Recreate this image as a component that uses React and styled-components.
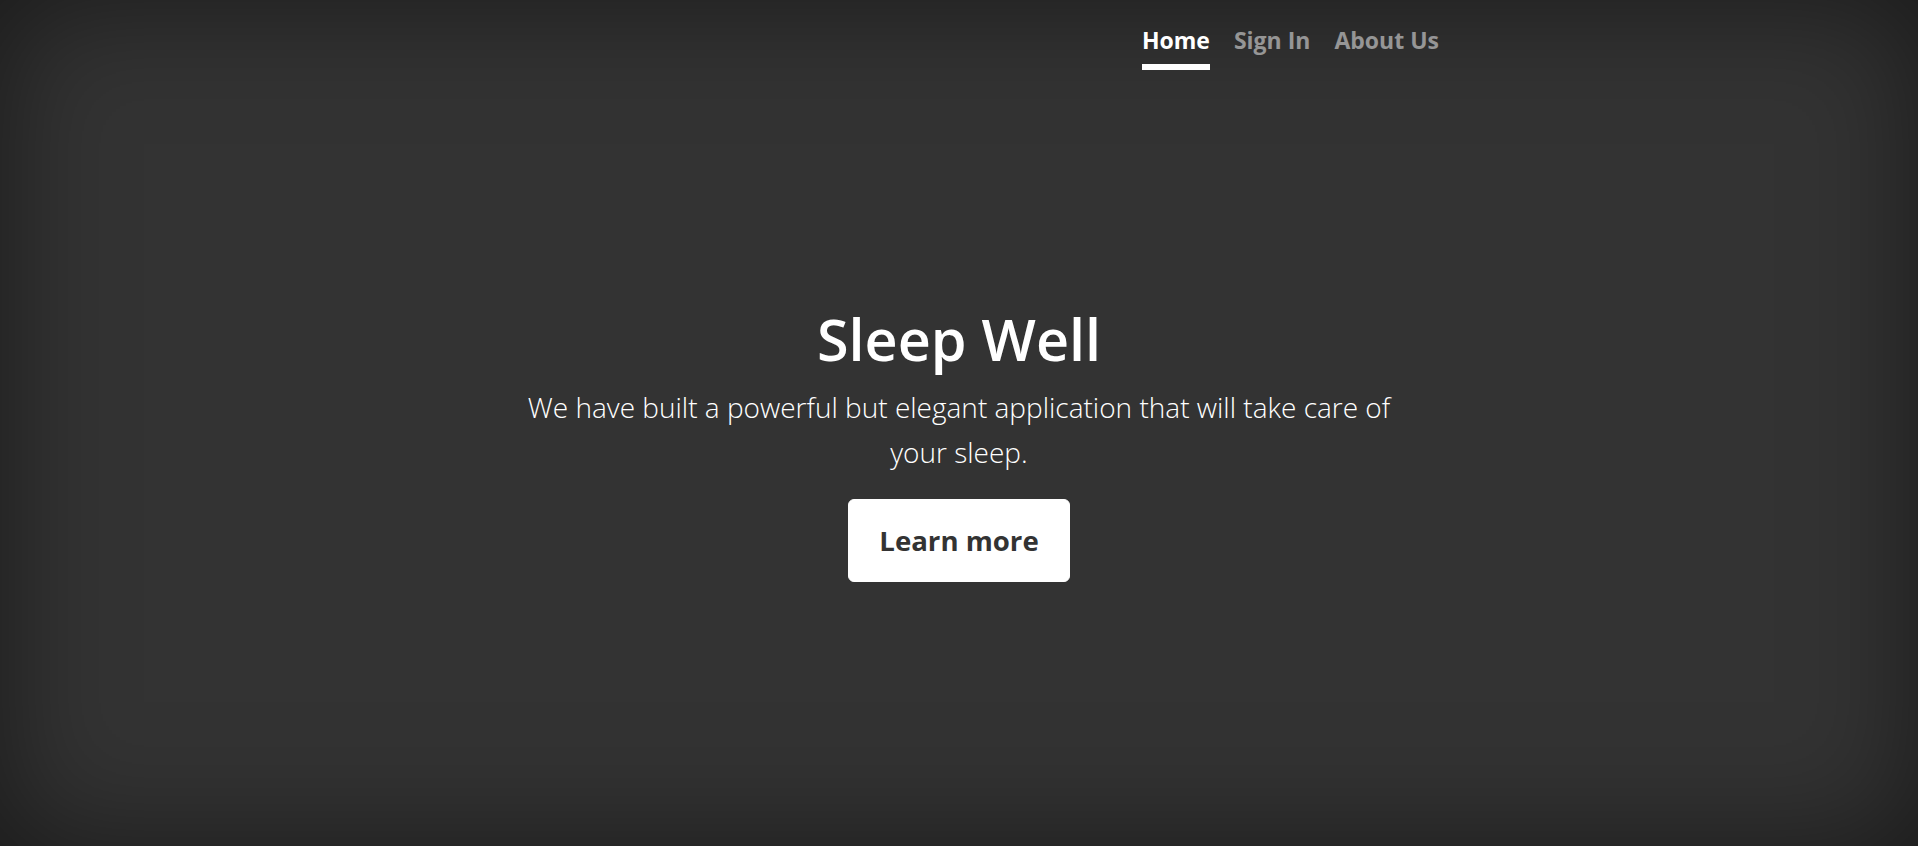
import React from "react";
import styled, { createGlobalStyle } from "styled-components";

const GlobalStyle = createGlobalStyle`
  html, body {
    height: 100%;
  }
  body {
    margin: 0;
    background-color: #333;
    color: #fff;
    font-family: "Open Sans", "Noto Sans", sans-serif;
    box-shadow: inset 0 0 120px rgba(0, 0, 0, 0.5);
  }
  #root {
    height: 100%;
  }
`;

const Cover = styled.div`
  display: flex;
  flex-direction: column;
  width: 100%;
  max-width: 1008px;
  height: 100%;
  margin: 0 auto;
  padding: 16px 24px;
  box-sizing: border-box;
`;

const Masthead = styled.header`
  display: flex;
  justify-content: flex-end;
`;

const Nav = styled.nav`
  display: flex;
  gap: 24px;
`;

const NavLink = styled.a`
  padding: 6px 0;
  font-size: 23px;
  line-height: 36px;
  font-weight: 700;
  color: ${(p) => (p.$active ? "#fff" : "rgba(255, 255, 255, 0.5)")};
  text-decoration: none;
  border-bottom: 6px solid ${(p) => (p.$active ? "#fff" : "transparent")};
  cursor: pointer;
  &:hover {
    color: rgba(255, 255, 255, 0.75);
  }
`;

const Main = styled.main`
  margin: auto 0;
  padding: 8px 24px 0;
  text-align: center;
`;

const Heading = styled.h1`
  margin: 0 0 10px;
  font-size: 57.5px;
  line-height: 72px;
  font-weight: 600;
`;

const Lead = styled.p`
  margin: 0 0 24px;
  font-size: 28px;
  line-height: 45px;
  font-weight: 300;
`;

const Button = styled.a`
  display: inline-block;
  padding: 18px 30px;
  font-size: 27.6px;
  line-height: 45px;
  font-weight: 700;
  color: #333;
  background-color: #fff;
  border: 1px solid #fff;
  border-radius: 6px;
  text-decoration: none;
  cursor: pointer;
`;

const links = [
  { label: "Home", active: true },
  { label: "Sign In" },
  { label: "About Us" },
];

const App = () => {
  return (
    <React.Fragment>
      <GlobalStyle />
      <Cover>
        <Masthead>
          <Nav>
            {links.map((link) => (
              <NavLink key={link.label} $active={link.active}>
                {link.label}
              </NavLink>
            ))}
          </Nav>
        </Masthead>
        <Main>
          <Heading>Sleep Well</Heading>
          <Lead>
            We have built a powerful but elegant application that will take care of your sleep.
          </Lead>
          <Lead>
            <Button>Learn more</Button>
          </Lead>
        </Main>
      </Cover>
    </React.Fragment>
  );
};

export default App;
